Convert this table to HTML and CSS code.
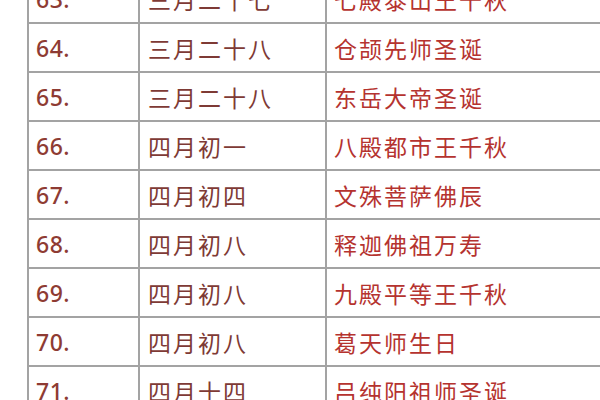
FILE: index.html
```html
<!DOCTYPE html>
<html>
<head>
<meta charset="utf-8">
<link rel="stylesheet" href="styles.css">
</head>
<body>
<div class="table">
  <div class="row"><div class="c num">63.</div><div class="c date">三月二十七</div><div class="c ev">七殿泰山王千秋</div></div>
  <div class="row"><div class="c num">64.</div><div class="c date">三月二十八</div><div class="c ev">仓颉先师圣诞</div></div>
  <div class="row"><div class="c num">65.</div><div class="c date">三月二十八</div><div class="c ev">东岳大帝圣诞</div></div>
  <div class="row"><div class="c num">66.</div><div class="c date">四月初一</div><div class="c ev">八殿都市王千秋</div></div>
  <div class="row"><div class="c num">67.</div><div class="c date">四月初四</div><div class="c ev">文殊菩萨佛辰</div></div>
  <div class="row"><div class="c num">68.</div><div class="c date">四月初八</div><div class="c ev">释迦佛祖万寿</div></div>
  <div class="row"><div class="c num">69.</div><div class="c date">四月初八</div><div class="c ev">九殿平等王千秋</div></div>
  <div class="row"><div class="c num">70.</div><div class="c date">四月初八</div><div class="c ev">葛天师生日</div></div>
  <div class="row"><div class="c num">71.</div><div class="c date">四月十四</div><div class="c ev">吕纯阳祖师圣诞</div></div>
</div>
</body>
</html>
```
FILE: styles.css
```css
html, body {
  margin: 0;
  padding: 0;
  background: #ffffff;
  overflow: hidden;
}
.table {
  margin-top: -25px;
  margin-left: 27px;
}
.row {
  display: flex;
  height: 47px;
  border-bottom: 2px solid #a3a3a3;
}
.c {
  display: flex;
  align-items: center;
  border-left: 2px solid #a3a3a3;
  box-sizing: border-box;
  padding-left: 7px;
  white-space: nowrap;
}
.num {
  width: 111px;
  font-family: "Noto Sans", "Open Sans", sans-serif;
  font-size: 23px;
  font-weight: 500;
  letter-spacing: 0.5px;
  color: #8e3b33;
  padding-left: 7px;
}
.date {
  width: 187px;
  font-family: "Noto Sans CJK SC", sans-serif;
  font-size: 23px;
  font-weight: 400;
  letter-spacing: 2px;
  color: #7e3a35;
  padding-left: 8px;
}
.ev {
  flex: 1;
  font-family: "Noto Sans CJK SC", sans-serif;
  font-size: 23px;
  font-weight: 400;
  letter-spacing: 2px;
  color: #b5332f;
  padding-left: 7px;
}
```
